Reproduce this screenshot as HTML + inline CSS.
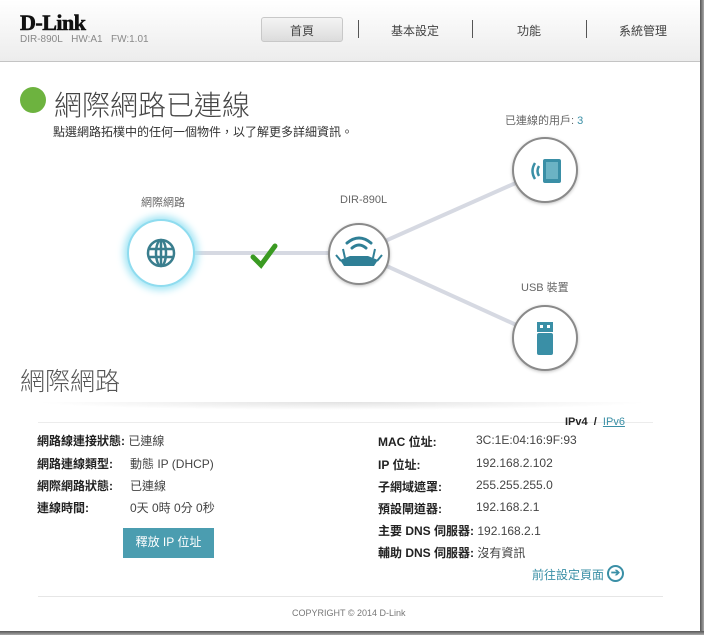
<!DOCTYPE html><html><head><meta charset="utf-8"><style>
*{margin:0;padding:0;box-sizing:border-box}
body{width:704px;height:635px;background:#fff;position:relative;overflow:hidden;font-family:"Liberation Sans","Noto Sans CJK TC",sans-serif;color:#333}
.a{position:absolute;white-space:nowrap}
.hdr{position:absolute;left:0;top:0;width:700px;height:62px;background:linear-gradient(#fff,#ececec);border-bottom:1px solid #c4c4c4}
.nav{font-size:12px;color:#444}
.sep{position:absolute;top:20px;width:1px;height:18px;background:#555}
.c{position:absolute;border-radius:50%;background:#fff;border:2px solid #8a8a8a;box-shadow:0 1px 3px rgba(0,0,0,.25)}
.lbl{font-size:11px;color:#666}
.k{font-size:12px;font-weight:bold;color:#222}
.v{font-size:12px;color:#444}
</style></head><body>
<div class="hdr"></div>
<div class="a" style="left:20px;top:10px;font:900 22px 'Liberation Serif',serif;color:#111;letter-spacing:-0.5px;-webkit-text-stroke:0.6px #111">D-Link</div>
<div class="a" style="left:20px;top:34px;font-size:10px;color:#888">DIR-890L&nbsp;&nbsp; HW:A1&nbsp;&nbsp; FW:1.01</div>
<div class="a" style="left:261px;top:17px;width:82px;height:25px;border:1px solid #c8c8c8;border-radius:3px;background:linear-gradient(#f4f4f4,#dcdcdc)"></div>
<div class="a nav" style="left:290px;top:22px">首頁</div>
<div class="sep" style="left:358px"></div>
<div class="a nav" style="left:391px;top:22px">基本設定</div>
<div class="sep" style="left:472px"></div>
<div class="a nav" style="left:517px;top:22px">功能</div>
<div class="sep" style="left:586px"></div>
<div class="a nav" style="left:619px;top:22px">系統管理</div>
<div class="a" style="left:700px;top:0;width:4px;height:635px;background:linear-gradient(90deg,#555,#aaa)"></div>
<div class="a" style="left:0;top:631px;width:704px;height:4px;background:linear-gradient(#555,#aaa)"></div>

<div class="a" style="left:20px;top:87px;width:26px;height:26px;border-radius:50%;background:#6db33f"></div>
<div class="a" style="left:54px;top:84px;font-size:28px;color:#444;font-weight:300">網際網路已連線</div>
<div class="a" style="left:53px;top:123px;font-size:12px;color:#333">點選網路拓樸中的任何一個物件，以了解更多詳細資訊。</div>
<div class="a lbl" style="left:505px;top:112px">已連線的用戶: <span style="color:#3a8fa6">3</span></div>
<div class="a lbl" style="left:141px;top:194px">網際網路</div>
<div class="a lbl" style="left:340px;top:194px">DIR-890L</div>
<div class="a lbl" style="left:521px;top:279px">USB 裝置</div>

<svg class="a" style="left:0;top:0" width="704" height="400">
<g stroke="#d6d9e2" stroke-width="4"><line x1="161" y1="253" x2="358" y2="253"/><line x1="358" y1="253" x2="545" y2="170"/><line x1="358" y1="253" x2="545" y2="338"/></g>
<path d="M253 257 L261 265 L275 246" stroke="#3a9a22" stroke-width="5" fill="none" stroke-linecap="round"/>
</svg>
<div class="c" style="left:127px;top:219px;width:68px;height:68px;border-color:#8fdcef;box-shadow:0 0 8px 3px #9fe4f4"></div>
<div class="c" style="left:328px;top:223px;width:62px;height:62px"></div>
<div class="c" style="left:512px;top:137px;width:66px;height:66px"></div>
<div class="c" style="left:512px;top:305px;width:66px;height:66px"></div>
<svg class="a" style="left:0;top:0" width="704" height="400" fill="none">
<g stroke="#3a7e8e" stroke-width="2.5"><circle cx="161" cy="253" r="13"/><ellipse cx="161" cy="253" rx="5" ry="13"/><line x1="148" y1="249" x2="174" y2="249"/><line x1="148" y1="257" x2="174" y2="257"/><line x1="161" y1="240" x2="161" y2="266"/></g>
<g stroke="#2f7f96" stroke-width="3" stroke-linecap="round"><path d="M347 243 Q359 233 371 243"/><path d="M352 248 Q359 242 366 248"/></g>
<path d="M340 260 L350 256 L368 256 L378 260 L374 266 L344 266Z" fill="#2f7f96"/>
<path d="M341 261 L336 255 M377 261 L382 255 M345 258 L343 249 M373 258 L375 249" stroke="#2f7f96" stroke-width="2"/>
<rect x="543" y="159" width="18" height="24" rx="2" fill="#3a8fa6"/><rect x="546" y="162" width="12" height="17" fill="#6bb3c4"/>
<g stroke="#3a8fa6" stroke-width="2.5"><path d="M535 163 Q530 171 535 179"/><path d="M539 166 Q536 171 539 176"/></g>
<rect x="537" y="322" width="16" height="10" fill="#3a8fa6"/><rect x="540" y="325" width="3" height="3" fill="#fff"/><rect x="547" y="325" width="3" height="3" fill="#fff"/>
<rect x="537" y="333" width="16" height="22" rx="2" fill="#3a8fa6"/>
</svg>

<div class="a" style="left:20px;top:362px;font-size:25px;color:#555;font-weight:300">網際網路</div>
<div class="a" style="left:35px;top:402px;width:615px;height:8px;background:radial-gradient(ellipse at 50% 0,#e2e2e2,transparent 70%)"></div>
<div class="a" style="left:38px;top:422px;width:615px;height:1px;border-top:1px solid #ececec"></div>
<div class="a" style="left:565px;top:416px;font-size:11px;font-weight:bold;color:#222">IPv4&nbsp; /&nbsp; <span style="color:#3a8fa6;text-decoration:underline;font-weight:normal">IPv6</span></div>

<div class="a k" style="left:37px;top:432px">網路線連接狀態: <span class="v" style="font-weight:normal">已連線</span></div>
<div class="a k" style="left:37px;top:455px">網路連線類型:</div><div class="a v" style="left:130px;top:455px">動態 IP (DHCP)</div>
<div class="a k" style="left:37px;top:477px">網際網路狀態:</div><div class="a v" style="left:130px;top:477px">已連線</div>
<div class="a k" style="left:37px;top:499px">連線時間:</div><div class="a v" style="left:130px;top:499px">0天 0時 0分 0秒</div>
<div class="a" style="left:123px;top:528px;width:91px;height:30px;background:#4b9db0;color:#fff;font-size:12px;text-align:center;line-height:29px">釋放 IP 位址</div>

<div class="a k" style="left:378px;top:433px">MAC 位址:</div><div class="a v" style="left:476px;top:433px">3C:1E:04:16:9F:93</div>
<div class="a k" style="left:378px;top:456px">IP 位址:</div><div class="a v" style="left:476px;top:456px">192.168.2.102</div>
<div class="a k" style="left:378px;top:478px">子網域遮罩:</div><div class="a v" style="left:476px;top:478px">255.255.255.0</div>
<div class="a k" style="left:378px;top:500px">預設閘道器:</div><div class="a v" style="left:476px;top:500px">192.168.2.1</div>
<div class="a k" style="left:378px;top:522px">主要 DNS 伺服器: <span class="v" style="font-weight:normal">192.168.2.1</span></div>
<div class="a k" style="left:378px;top:544px">輔助 DNS 伺服器: <span class="v" style="font-weight:normal">沒有資訊</span></div>
<div class="a" style="left:532px;top:566px;font-size:12px;color:#3a8fa6">前往設定頁面</div>
<div class="a" style="left:607px;top:565px;width:17px;height:17px;border:2px solid #3a8fa6;border-radius:50%;color:#3a8fa6;font-size:11px;font-weight:bold;text-align:center;line-height:13px">➔</div>
<div class="a" style="left:38px;top:596px;width:625px;height:1px;background:#e6e6e6"></div>
<div class="a" style="left:292px;top:608px;font-size:9px;color:#777">COPYRIGHT © 2014 D-Link</div>
</body></html>
